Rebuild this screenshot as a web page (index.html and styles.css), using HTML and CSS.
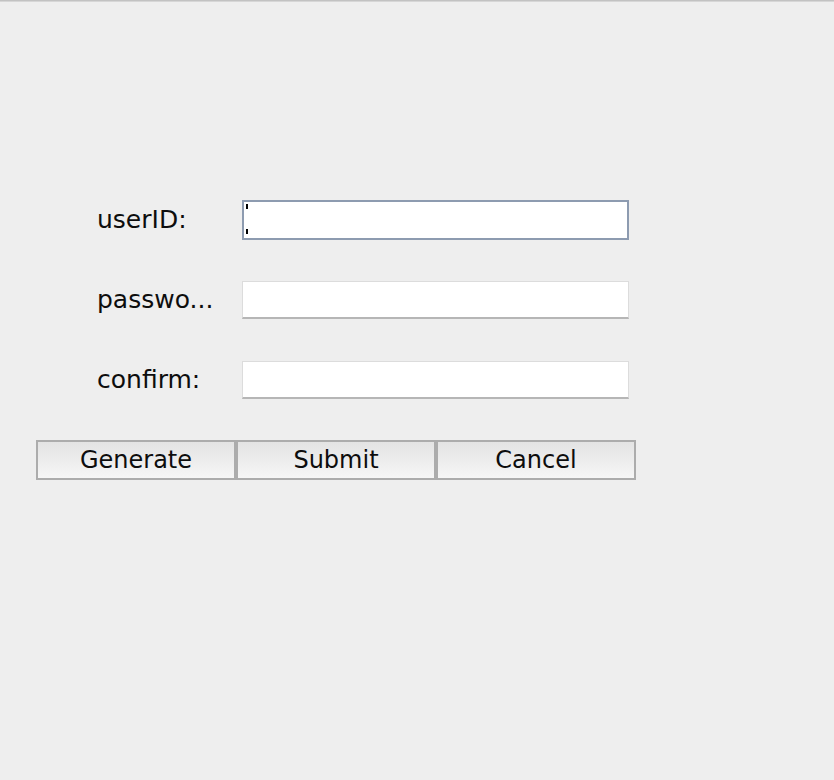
FILE: index.html
```
<!DOCTYPE html>
<html>
<head>
<meta charset="utf-8">
<link rel="stylesheet" href="styles.css">
</head>
<body>
<div class="window">
  <form class="form">
    <label class="label" for="uid">userID:</label>
    <div class="field-wrap focused"><input id="uid" class="field" type="text"><span class="caret"></span></div>
    <label class="label" for="pw">passwo...</label>
    <div class="field-wrap"><input id="pw" class="field" type="password"></div>
    <label class="label" for="cf">confirm:</label>
    <div class="field-wrap"><input id="cf" class="field" type="password"></div>
  </form>
  <div class="buttons">
    <button class="btn" type="button">Generate</button>
    <button class="btn" type="button">Submit</button>
    <button class="btn" type="button">Cancel</button>
  </div>
</div>
</body>
</html>
```
FILE: styles.css
```
html, body {
  margin: 0;
  padding: 0;
  background: #eeeeee;
}
body {
  font-family: "DejaVu Sans", "Liberation Sans", sans-serif;
  color: #111;
}
.window {
  width: 834px;
  height: 780px;
  box-sizing: border-box;
  border-top: 1px solid #c2c2c2;
  box-shadow: inset 0 1px 0 #d6d6d6;
  padding-top: 199px;
}
.form {
  display: grid;
  grid-template-columns: 145px 387px;
  grid-auto-rows: 40px;
  row-gap: 40px;
  margin: 0 0 0 97px;
  align-items: center;
}
.label {
  font-size: 25px;
  line-height: 40px;
  white-space: nowrap;
  color: #0d0d0d;
}
.field-wrap {
  position: relative;
  height: 40px;
  display: flex;
  align-items: center;
}
.field {
  display: block;
  width: 100%;
  height: 38px;
  margin: 0;
  box-sizing: border-box;
  background: #fff;
  border: 1px solid #dcdcdc;
  border-bottom: 2px solid #b6b6b6;
  outline: none;
  padding: 0 4px;
  font: inherit;
  font-size: 22px;
  caret-color: transparent;
}
.focused .field {
  height: 40px;
  border: 2px solid #8d9bb0;
}
.caret {
  position: absolute;
  left: 4px;
  top: 4px;
  width: 2px;
  height: 5px;
  background: #000;
}
.caret::after {
  content: "";
  position: absolute;
  left: 0;
  top: 25px;
  width: 2px;
  height: 5px;
  background: #000;
}
.buttons {
  display: flex;
  margin: 40px 0 0 36px;
}
.btn {
  width: 200px;
  height: 40px;
  box-sizing: border-box;
  margin: 0;
  padding: 0;
  border: 2px solid #acacac;
  background: linear-gradient(#e3e3e3, #f6f6f6);
  font-family: "DejaVu Sans", "Liberation Sans", sans-serif;
  font-size: 24px;
  color: #0d0d0d;
  line-height: 34px;
}
```
